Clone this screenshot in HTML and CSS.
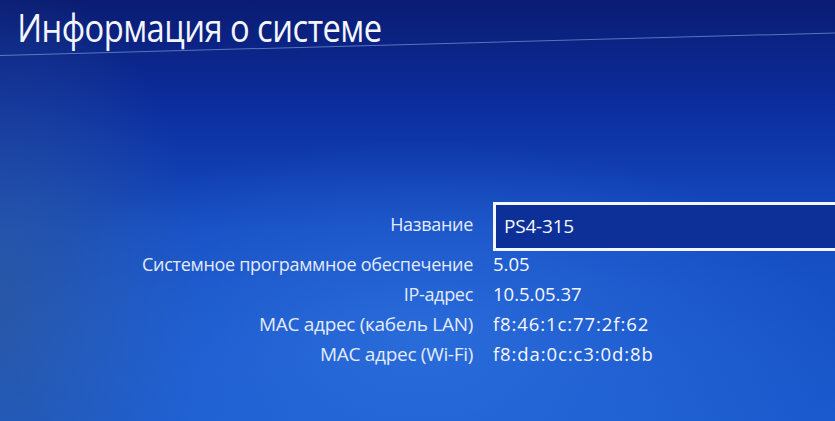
FILE: index.html
```html
<!DOCTYPE html>
<html lang="ru">
<head>
    <meta charset="UTF-8">
    <meta name="viewport" content="width=device-width, initial-scale=1.0">
    <title>Информация о системе</title>
    <link rel="stylesheet" href="styles.css">
</head>
<body>
    <div class="screen">
        <header class="header">
            <h1>Информация о системе</h1>
            <div class="divider"></div>
        </header>

        <div class="info">
            <div class="label name-label">Название</div>
            <div class="value name-value"><div class="name-box">PS4-315</div></div>

            <div class="label">Системное программное обеспечение</div>
            <div class="value">5.05</div>

            <div class="label">IP-адрес</div>
            <div class="value">10.5.05.37</div>

            <div class="label mac">MAC адрес (кабель LAN)</div>
            <div class="value mac">f8:46:1c:77:2f:62</div>

            <div class="label mac">MAC адрес (Wi-Fi)</div>
            <div class="value mac">f8:da:0c:c3:0d:8b</div>
        </div>
    </div>
</body>
</html>
```

FILE: styles.css
```css
/* Экран информации о системе */
body {
    margin: 0;
    padding: 0;
    font-family: 'Open Sans', 'Noto Sans', sans-serif;
    color: #f2f5ff;
    overflow: hidden;
}

.screen {
    width: 835px;
    height: 421px;
    overflow: hidden;
    background:
        radial-gradient(ellipse 420px 200px at 420px 340px, rgba(60, 130, 235, 0.5), rgba(60, 130, 235, 0) 100%),
        radial-gradient(ellipse 200px 330px at 0 300px, rgba(50, 90, 150, 0.65), rgba(50, 90, 150, 0) 100%),
        linear-gradient(180deg, #0a1c72 0%, #0c2d9e 25%, #154dc2 55%, #1a5ace 100%);
}

.header {
    height: 90px;
}

.header h1 {
    margin: 0;
    padding: 5px 0 0 20px;
    font-size: 38px;
    font-weight: 400;
    letter-spacing: -0.6px;
    line-height: 44px;
    color: #f4f6ff;
    transform: scaleX(0.86);
    transform-origin: left top;
    white-space: nowrap;
}

.divider {
    width: 860px;
    height: 1px;
    background: rgba(170, 195, 240, 0.5);
    transform-origin: left center;
    transform: rotate(-1.55deg);
    margin-top: 6px;
}

.info {
    display: grid;
    grid-template-columns: 473px 1fr;
    grid-template-rows: 47px;
    grid-auto-rows: 30px;
    column-gap: 20px;
    margin-top: 112px;
    font-size: 18px;
    letter-spacing: -0.3px;
}

.label {
    text-align: right;
    line-height: 30px;
    color: #e4ebfb;
}

.label.mac {
    font-size: 19px;
}

.value {
    line-height: 30px;
    font-size: 18.5px;
    letter-spacing: 0;
    color: #f6f8ff;
}

.value.mac {
    letter-spacing: 0.9px;
}

.name-label {
    line-height: 44px;
}

.name-box {
    height: 43px;
    line-height: 43px;
    padding-left: 8px;
    border: 3px solid #f4f6ff;
    border-right: none;
    background: #0c2f98;
    font-size: 19px;
    letter-spacing: -0.2px;
}
```
